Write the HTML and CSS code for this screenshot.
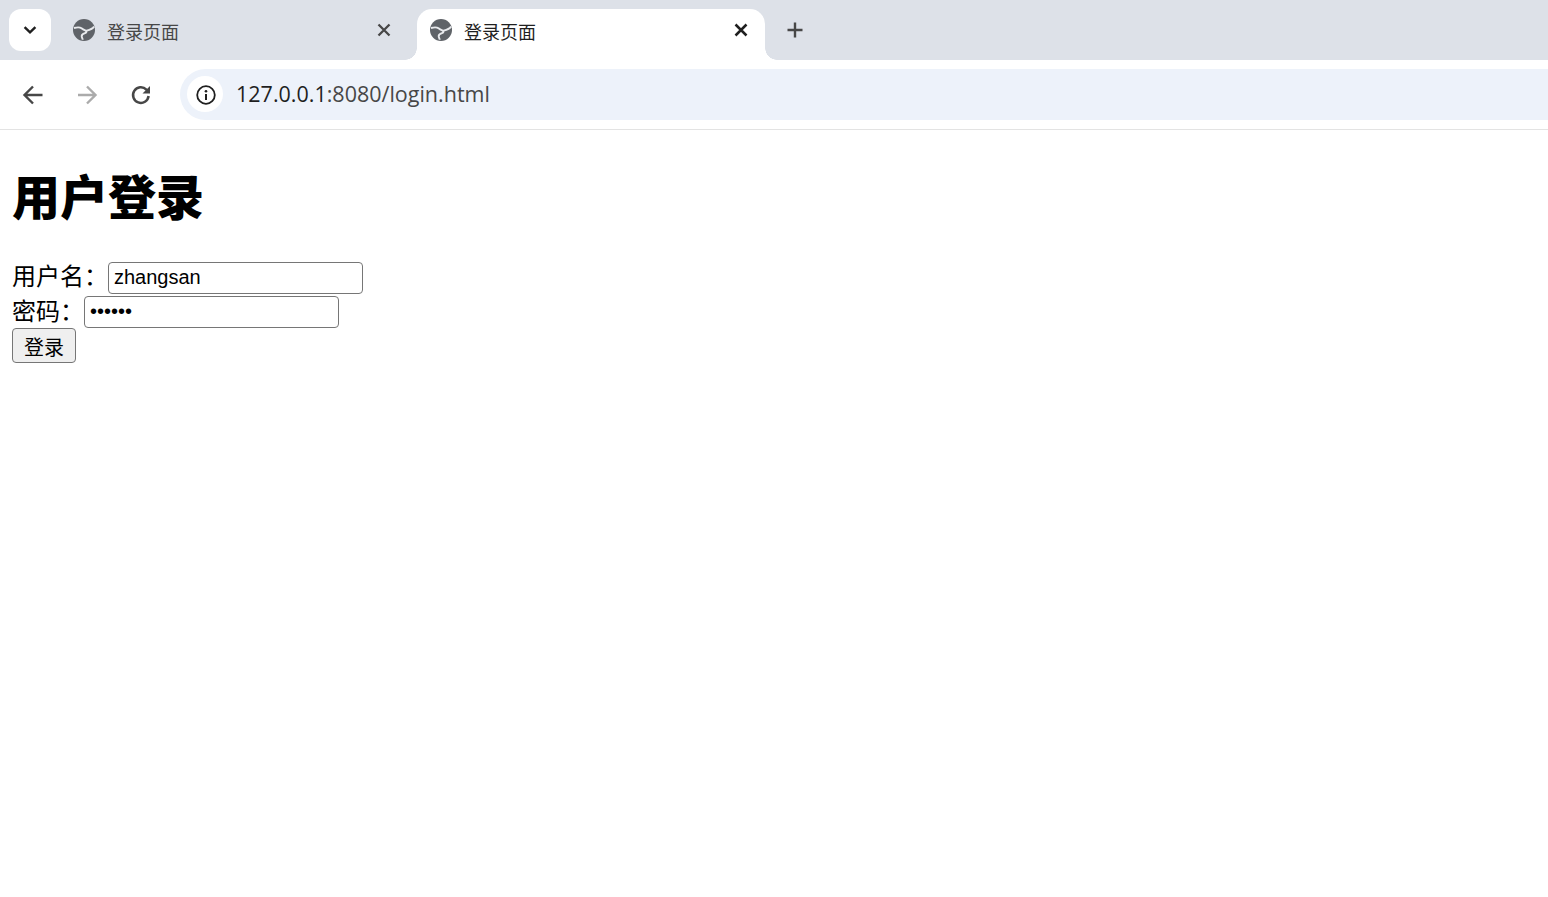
FILE: index.html
```html
<!DOCTYPE html>
<html lang="zh-CN">
<head>
<meta charset="utf-8">
<title>登录页面</title>
<link rel="stylesheet" href="styles.css">
</head>
<body>
<header class="chrome">
  <div class="tabstrip">
    <button class="tabsearch" aria-label="搜索标签页">
      <svg width="16" height="16" viewBox="0 0 16 16"><path d="M2.600 5.200 8 10.400l5.400-5.200" fill="none" stroke="#1f1f1f" stroke-width="2.400"/></svg>
    </button>
    <div class="tab">
      <svg class="globe" width="24" height="24" viewBox="0 0 24 24"><use href="#globe"/></svg>
      <span class="tabtitle dim">登录页面</span>
      <svg class="close" width="16" height="16" viewBox="0 0 16 16"><path d="M2.500 2.500l11 11M13.500 2.500l-11 11" stroke="#474747" stroke-width="2.300" fill="none"/></svg>
    </div>
    <div class="tab active">
      <svg class="globe" width="24" height="24" viewBox="0 0 24 24"><use href="#globe"/></svg>
      <span class="tabtitle">登录页面</span>
      <svg class="close" width="16" height="16" viewBox="0 0 16 16"><path d="M2.500 2.500l11 11M13.500 2.500l-11 11" stroke="#1f1f1f" stroke-width="2.500" fill="none"/></svg>
    </div>
    <button class="newtab" aria-label="新建标签页">
      <svg width="18" height="18" viewBox="0 0 18 18"><path d="M9 1.500v15M1.500 9h15" stroke="#474747" stroke-width="2.400" fill="none"/></svg>
    </button>
  </div>
  <div class="toolbar">
    <div class="navbtn">
      <svg width="24" height="24" viewBox="0 0 24 24"><path d="M21.500 12H4.500M12 3.500 3.500 12l8.500 8.500" fill="none" stroke="#474747" stroke-width="2.400"/></svg>
    </div>
    <div class="navbtn">
      <svg width="24" height="24" viewBox="0 0 24 24"><path d="M3 12h16.500M12 3.500l8.500 8.500-8.500 8.500" fill="none" stroke="#ababab" stroke-width="2.400"/></svg>
    </div>
    <div class="navbtn">
      <svg width="24" height="24" viewBox="0 0 24 24"><path d="M19.600 13a7.800 7.800 0 1 1-2.200-6.400L20 9" fill="none" stroke="#474747" stroke-width="2.500"/><path d="M21 3v7.500h-7.500z" fill="#474747"/></svg>
    </div>
    <div class="omnibox">
      <div class="chip">
        <svg class="chipicon" width="22" height="22" viewBox="0 0 22 22"><circle cx="11" cy="11" r="8.800" fill="none" stroke="#1f1f1f" stroke-width="1.800"/><path d="M11 10v6" stroke="#1f1f1f" stroke-width="2"/><circle cx="11" cy="7.200" r="1.300" fill="#1f1f1f"/></svg>
      </div>
      <span class="url"><span class="host">127.0.0.1</span>:8080/login.html</span>
    </div>
  </div>
</header>
<main class="page">
  <h1 class="title">用户登录</h1>
  <form class="form">
    <div class="row first"><label class="label">用户名：</label><input class="field" type="text" value="zhangsan"></div>
    <div class="row second"><label class="label">密码：</label><input class="field" type="password" value="123456"></div>
    <button class="submit" type="button">登录</button>
  </form>
</main>
<svg class="defs" width="0" height="0">
  <defs>
    <symbol id="globe" viewBox="0 0 24 24">
      <circle cx="12" cy="12" r="11" fill="#5f6368"/>
      <path d="M2 10c3-.8 5.500-1.200 7.500.3 1.800 1.400 3 1.800 4.500 2.500 1 .6.300 1.900-1 2.300-2 .6-3.500 1.300-3.300 3.200.1 1.400 1 2.300 1 3.500" fill="none" stroke="#e8eaed" stroke-width="1.900"/>
      <path d="M22 8.500c-1.500 3-4.500 3.500-8 4.300" fill="none" stroke="#e8eaed" stroke-width="1.900"/>
    </symbol>
  </defs>
</svg>
</body>
</html>
```

FILE: styles.css
```css
* { box-sizing: border-box; }
html, body { margin: 0; padding: 0; background: #fff; }
body { height: 897px; overflow: hidden; font-family: "Liberation Sans", "Noto Sans CJK SC", sans-serif; color: #000; }

.chrome { display: flex; flex-direction: column; height: 130px; }

.tabstrip { display: flex; align-items: flex-end; height: 60px; background: #dde1e8; padding-left: 9px; }
.tabsearch { display: flex; align-items: center; justify-content: center; width: 42px; height: 42px; margin-bottom: 9px; padding: 0; border: 0; border-radius: 12px; background: #fff; }

.tab { position: relative; display: flex; align-items: center; height: 51px; padding: 0 0 10px 12px; font-family: "Noto Sans CJK SC", sans-serif; font-size: 18px; }
.tab:not(.active) { width: 357px; margin-left: 9px; }
.tab:not(.active) .close { margin-right: 25px; }
.tab.active { width: 348px; background: #fff; border-radius: 15px 15px 0 0; }
.tab.active::before, .tab.active::after { content: ""; position: absolute; bottom: 0; width: 12px; height: 12px; }
.tab.active::before { left: -12px; background: radial-gradient(circle at 0 0, #dde1e8 11.500px, #fff 12px); }
.tab.active::after { right: -12px; background: radial-gradient(circle at 100% 0, #dde1e8 11.500px, #fff 12px); }

.globe { flex: none; }
.tabtitle { flex: 1; margin-left: 11px; margin-top: 2px; color: #1f1f1f; line-height: 26px; }
.tabtitle.dim { color: #474747; }
.close { flex: none; margin-right: 16px; }

.newtab { display: flex; align-items: center; justify-content: center; width: 36px; height: 36px; margin: 0 0 12px 12px; padding: 0; border: 0; background: transparent; }

.toolbar { display: flex; align-items: center; height: 70px; padding: 0 0 1px 6px; background: #fff; border-bottom: 1px solid #e3e3e3; border-radius: 12px 0 0 0; }
.navbtn { display: flex; align-items: center; justify-content: center; width: 54px; height: 48px; margin-top: 2px; }
.omnibox { display: flex; align-items: center; flex: 1; height: 51px; margin-left: 12px; padding-left: 7px; background: #edf2fa; border-radius: 26px 0 0 26px; }
.chip { display: flex; align-items: center; justify-content: center; width: 36px; height: 36px; border-radius: 50%; background: #fff; }
.chipicon { margin: 2px 0 0 2px; }
.url { margin-left: 13px; margin-top: -2px; font-family: "Open Sans", sans-serif; font-size: 21.500px; color: #474747; }
.host { color: #1f1f1f; }

.page { padding: 31px 12px 0; }
.title { margin: 0 0 35px; font-family: "Noto Sans CJK SC", sans-serif; font-size: 48px; font-weight: 900; line-height: 66px; }
.form { display: flex; flex-direction: column; align-items: flex-start; }
.row { display: flex; align-items: center; height: 32px; }
.row.first { margin-bottom: 2px; }
.label { font-family: "Noto Sans CJK SC", sans-serif; font-size: 24px; line-height: 32px; margin-top: -7px; }
.row.second .label { margin-top: -5px; }
.field { width: 255px; height: 32px; padding: 0 5px 2px; border: 1px solid #767676; border-radius: 4px; background: #fff; font-family: "Liberation Sans", sans-serif; font-size: 20px; color: #000; }
.submit { width: 64px; height: 35px; padding: 2px 0 0; border: 1px solid #767676; border-radius: 4px; background: #efefef; font-family: "Noto Sans CJK SC", sans-serif; font-size: 20px; color: #000; }
.defs { display: block; }
```
